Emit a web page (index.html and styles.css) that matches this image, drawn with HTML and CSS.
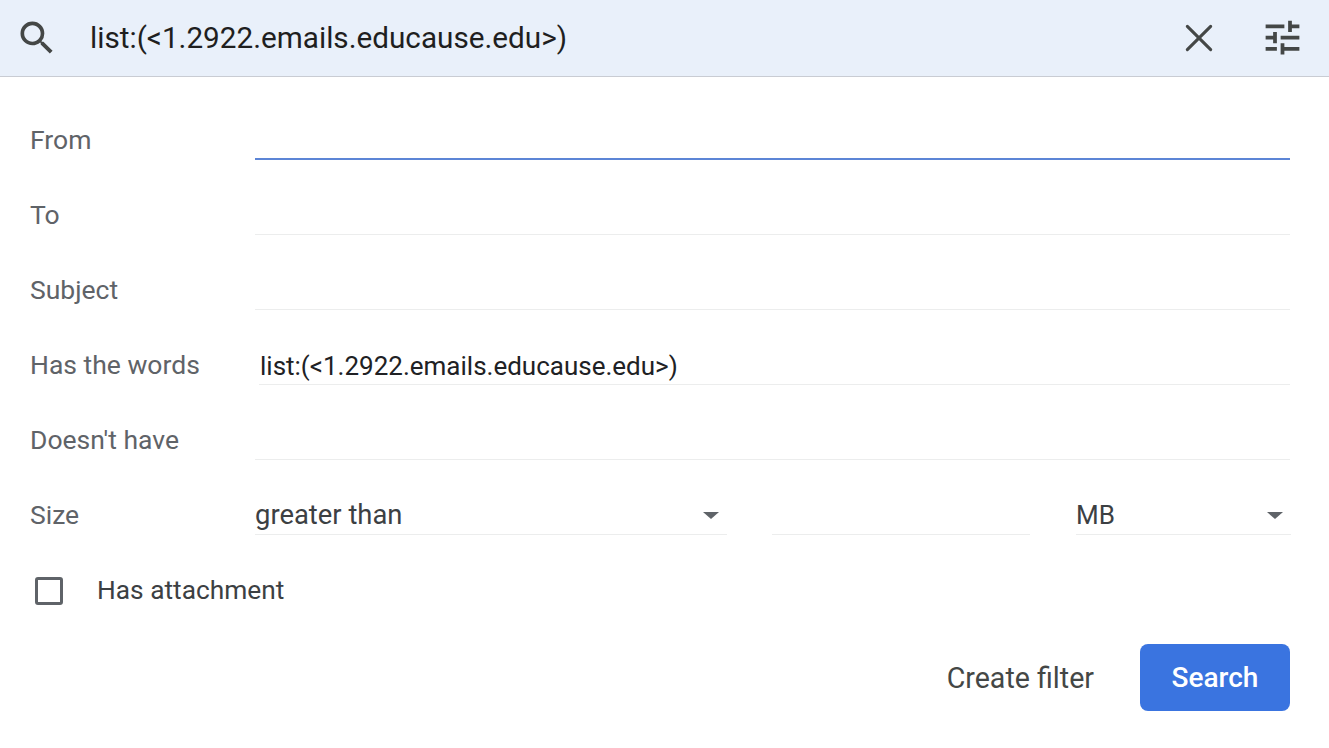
FILE: index.html
```html
<!DOCTYPE html>
<html lang="en">
<head>
<meta charset="utf-8">
<title>Search</title>
<link rel="stylesheet" href="styles.css">
</head>
<body>
<header class="bar">
  <svg class="icon-search" viewBox="0 0 24 24"><path d="M15.5 14h-.79l-.28-.27A6.47 6.47 0 0 0 16 9.5 6.5 6.5 0 1 0 9.5 16c1.61 0 3.09-.59 4.23-1.57l.27.28v.79l5 4.99L20.49 19l-4.99-5zm-6 0C7.01 14 5 11.99 5 9.5S7.01 5 9.5 5 14 7.01 14 9.5 11.99 14 9.5 14z"/></svg>
  <div class="query">list:(&lt;1.2922.emails.educause.edu&gt;)</div>
  <svg class="icon-close" viewBox="0 0 24 24"><path d="M5 5 19 19M19 5 5 19"/></svg>
  <svg class="icon-tune" viewBox="0 0 24 24"><path d="M3 17v2h6v-2H3zM3 5v2h10V5H3zm10 16v-2h8v-2h-8v-2h-2v6h2zM7 9v2H3v2h4v2h2V9H7zm14 4v-2H11v2h10zm-6-4h2V7h4V5h-4V3h-2v6z"/></svg>
</header>
<main class="form">
  <div class="row"><div class="label">From</div><div class="field focus"></div></div>
  <div class="row"><div class="label">To</div><div class="field"></div></div>
  <div class="row"><div class="label">Subject</div><div class="field"></div></div>
  <div class="row"><div class="label">Has the words</div><div class="field filled">list:(&lt;1.2922.emails.educause.edu&gt;)</div></div>
  <div class="row"><div class="label">Doesn't have</div><div class="field"></div></div>
  <div class="row">
    <div class="label">Size</div>
    <div class="size">
      <div class="field select first">greater than<span class="caret"></span></div>
      <div class="field amount"></div>
      <div class="field select unit">MB<span class="caret"></span></div>
    </div>
  </div>
  <div class="check-row">
    <span class="checkbox"></span>
    <span class="check-label">Has attachment</span>
  </div>
  <div class="actions">
    <span class="create">Create filter</span>
    <button class="search" type="button">Search</button>
  </div>
</main>
</body>
</html>
```
FILE: styles.css
```css
html, body { margin: 0; padding: 0; background: #fff; }
body { width: 1329px; height: 748px; overflow: hidden; font-family: Roboto, "Liberation Sans", sans-serif; color: #202124; }
.bar { display: flex; align-items: center; height: 76px; box-sizing: content-box; background: #e9f0fa; border-bottom: 1px solid #c9ccd3; }
.icon-search { width: 44px; height: 44px; margin-left: 15px; fill: #444746; flex: none; }
.query { flex: 1; margin-left: 31px; padding-bottom: 2px; font-size: 29.7px; color: #1f1f1f; }
.icon-close { width: 40px; height: 40px; flex: none; fill: none; stroke: #444746; stroke-width: 1.85; stroke-linecap: round; }
.icon-tune { width: 45px; height: 45px; flex: none; margin: 0 24px 2px 41px; fill: #444746; }
.form { padding: 8px 39px 0 30px; }
.row { display: flex; height: 75px; }
.label { width: 225px; flex: none; font-size: 26.5px; line-height: 30px; padding-top: 40px; color: #5f6368; box-sizing: border-box; }
.field { flex: 1; height: 75px; box-sizing: border-box; border-bottom: 1.5px solid #eceded; font-size: 26px; line-height: 30px; padding-top: 40px; color: #3c4043; }
.focus { border-bottom: 2px solid #5c85d6; }
.filled { margin-left: 4px; padding-left: 1px; padding-top: 41px; color: #202124; }
.size { flex: 1; display: flex; }
.select { position: relative; color: #3c4043; }
.first { flex: none; width: 472px; margin-right: 45px; font-size: 27.4px; }
.amount { flex: none; width: 258px; margin-right: 46px; }
.unit { flex: none; width: 215px; }
.caret { position: absolute; right: 8px; top: 52px; width: 0; height: 0; border-left: 8.5px solid transparent; border-right: 8.5px solid transparent; border-top: 7px solid #5f6368; }
.check-row { display: flex; align-items: center; height: 75px; margin-top: 17px; }
.checkbox { display: block; width: 28px; height: 28px; margin-left: 5px; margin-top: 3px; box-sizing: border-box; border: 3px solid #5f6368; border-radius: 3px; flex: none; }
.check-label { margin-left: 34px; font-size: 26.3px; color: #3c4043; }
.actions { display: flex; align-items: center; justify-content: flex-end; margin-top: 17px; }
.create { font-size: 28.6px; font-weight: 400; color: #444746; margin-right: 46px; }
.search { width: 150px; height: 67px; border: 0; border-radius: 8px; background: #3a74e0; color: #fff; font-family: inherit; font-size: 28px; font-weight: 500; padding: 0; }
```
